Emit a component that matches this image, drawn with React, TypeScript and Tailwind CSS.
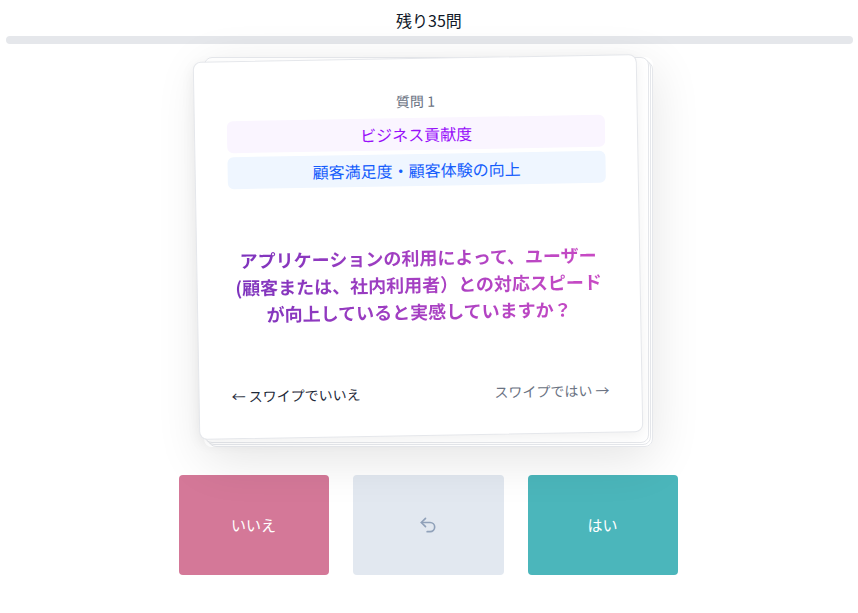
import React from "react";

function Undo2Icon() {
  return (
    <svg width="20" height="20" viewBox="0 0 24 24" fill="none" stroke="currentColor" strokeWidth="2" strokeLinecap="round" strokeLinejoin="round">
      <path d="M9 14 4 9l5-5" />
      <path d="M4 9h10.5a5.5 5.5 0 0 1 5.5 5.5a5.5 5.5 0 0 1-5.5 5.5H11" />
    </svg>
  );
}

export default function App() {
  return (
    <div className="w-[858px] h-[613px] bg-white flex flex-col items-center overflow-hidden font-['Noto_Sans_CJK_JP','Noto_Sans',sans-serif]">
      <div className="pt-[10px] text-base leading-5 text-gray-900">残り35問</div>
      <div className="mt-[6px] w-[847px] h-2 rounded-full bg-gray-200" />

      <div className="relative mt-[13px] w-[449px] h-[390px] -ml-[1px]">
        <div className="absolute inset-0 rounded-lg shadow-[0_12px_50px_rgba(0,0,0,0.11)]" />
        <div className="absolute top-[4px] left-[4px] right-0 bottom-0 rounded-lg bg-white border border-gray-200" />
        <div className="absolute top-[2px] left-[2px] right-[2px] bottom-[2px] rounded-lg bg-white border border-gray-200" />
        <div className="absolute top-0 left-0 right-[4px] bottom-[4px] rounded-lg bg-white border border-gray-200" />

        <div className="absolute left-[-8px] top-[1px] w-[444px] h-[378px] rotate-[-1deg] rounded-lg bg-white border border-gray-200 shadow-[0_4px_14px_rgba(0,0,0,0.06)] flex flex-col px-8 pt-8 pb-8">
          <div className="text-center text-sm leading-5 text-gray-500">質問 1</div>
          <div className="mt-[7px] flex flex-col gap-1">
            <div className="h-8 rounded-md bg-purple-50 flex items-center justify-center text-base text-purple-600">ビジネス貢献度</div>
            <div className="h-8 rounded-md bg-blue-50 flex items-center justify-center text-base text-blue-600">顧客満足度・顧客体験の向上</div>
          </div>
          <div className="flex-1 flex items-center justify-center">
            <p className="text-center text-lg leading-[27px] font-bold bg-linear-to-r from-[#7d33bd] via-[#a53fc2] to-[#c94bc4] bg-clip-text text-transparent">
              アプリケーションの利用によって、ユーザー
              <br />
              (顧客または、社内利用者）との対応スピード
              <br />
              が向上していると実感していますか？
            </p>
          </div>
          <div className="flex items-center justify-between text-sm leading-5">
            <span className="text-gray-800">← スワイプでいいえ</span>
            <span className="text-gray-500">スワイプではい →</span>
          </div>
        </div>
      </div>

      <div className="mt-[28px] flex gap-6 -ml-[2px]">
        <button className="w-[150px] h-[100px] rounded bg-[#d47898] text-white text-[15px] font-normal flex items-center justify-center">いいえ</button>
        <button className="w-[151px] h-[100px] rounded bg-slate-200 text-slate-400 flex items-center justify-center">
          <Undo2Icon />
        </button>
        <button className="w-[150px] h-[100px] rounded bg-[#4bb6bb] text-white text-[15px] font-normal flex items-center justify-center">はい</button>
      </div>
    </div>
  );
}
